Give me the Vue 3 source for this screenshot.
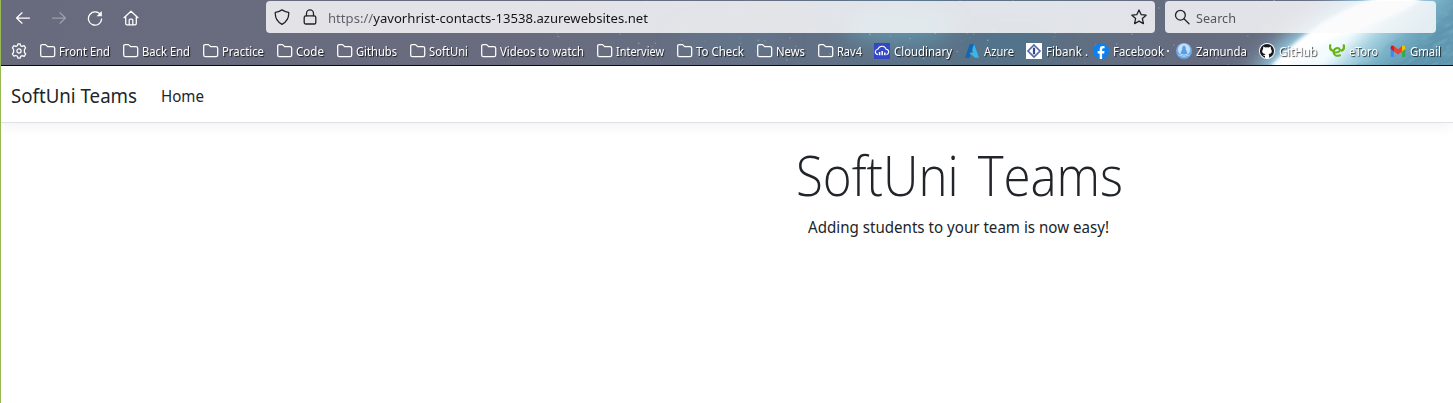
<script setup>
const fit = (el, { value }) => {
  el.style.transform = 'none'
  const w = el.getBoundingClientRect().width
  el.style.transform = `scaleX(${value / w})`
}
const vFit = { mounted: fit }

// x: left edge of the icon slot, l: left edge of the label, w: label width
const marks = [
  { t: 'Front End', i: 'folder', x: 40, l: 59, w: 51 },
  { t: 'Back End', i: 'folder', x: 123, l: 142, w: 48 },
  { t: 'Practice', i: 'folder', x: 203, l: 222, w: 42 },
  { t: 'Code', i: 'folder', x: 277, l: 296, w: 28 },
  { t: 'Githubs', i: 'folder', x: 337, l: 356, w: 41 },
  { t: 'SoftUni', i: 'folder', x: 410, l: 429, w: 39 },
  { t: 'Videos to watch', i: 'folder', x: 481, l: 500, w: 84 },
  { t: 'Interview', i: 'folder', x: 597, l: 616, w: 48 },
  { t: 'To Check', i: 'folder', x: 677, l: 696, w: 48 },
  { t: 'News', i: 'folder', x: 757, l: 776, w: 29 },
  { t: 'Rav4', i: 'folder', x: 818, l: 837, w: 25 },
  { t: 'Cloudinary', i: 'cloud', x: 874, l: 894, w: 58 },
  { t: 'Azure', i: 'azure', x: 964, l: 984, w: 30 },
  { t: 'Fibank .', i: 'fibank', x: 1026, l: 1046, w: 42 },
  { t: 'Facebook', i: 'facebook', x: 1093, l: 1113, w: 51, dot: true },
  { t: 'Zamunda', i: 'zamunda', x: 1176, l: 1196, w: 51 },
  { t: 'GitHub', i: 'github', x: 1259, l: 1279, w: 38 },
  { t: 'eToro', i: 'etoro', x: 1329, l: 1349, w: 29 },
  { t: 'Gmail', i: 'gmail', x: 1390, l: 1410, w: 31 },
].map((m, k, a) => ({ ...m, width: (a[k + 1]?.x ?? 1453) - m.x }))

const stars = Array.from({ length: 110 }, (_, k) => ({
  x: 540 + ((k * 137.5 + k * k * 3.7) % 760),
  y: (k * 23.3 + k * k * 1.9) % 66,
  o: 0.12 + ((k * 7) % 10) / 25,
}))
</script>

<template>
  <div class="window">
    <header class="chrome">
      <svg class="sky" width="1453" height="66" viewBox="0 0 1453 66" aria-hidden="true">
        <defs>
          <linearGradient id="base" x1="0" x2="1">
            <stop offset="0" stop-color="#686b7d" />
            <stop offset=".37" stop-color="#696c7e" />
            <stop offset=".52" stop-color="#656f84" />
            <stop offset=".64" stop-color="#5b7388" />
            <stop offset=".75" stop-color="#616e82" />
            <stop offset=".82" stop-color="#666c80" />
            <stop offset="1" stop-color="#667084" />
          </linearGradient>
          <linearGradient id="planet" gradientUnits="userSpaceOnUse" x1="1320" y1="10" x2="1390" y2="80">
            <stop offset="0" stop-color="#fff" />
            <stop offset=".4" stop-color="#f0fafd" />
            <stop offset=".58" stop-color="#a9d3e2" />
            <stop offset=".8" stop-color="#76aec5" />
            <stop offset="1" stop-color="#6095ae" />
          </linearGradient>
          <filter id="b2" x="-30%" y="-60%" width="160%" height="220%"><feGaussianBlur stdDeviation="2" /></filter>
          <filter id="b9" x="-60%" y="-100%" width="220%" height="300%"><feGaussianBlur stdDeviation="11" /></filter>
          <filter id="tex" x="0" y="0" width="100%" height="100%">
            <feTurbulence type="fractalNoise" baseFrequency=".07 .26" numOctaves="4" seed="8" />
            <feColorMatrix values="0 0 0 0 .16  0 0 0 0 .42  0 0 0 0 .55  3 0 0 0 -1.3" />
          </filter>
          <clipPath id="disc"><path d="M1273 66C1298 40 1340 10 1384-4H1453V66Z" /></clipPath>
        </defs>
        <rect width="1453" height="66" fill="url(#base)" />
        <g filter="url(#b9)">
          <ellipse cx="898" cy="26" rx="54" ry="16" fill="#69b2c7" opacity=".55" />
          <ellipse cx="1012" cy="44" rx="44" ry="14" fill="#397b99" opacity=".4" />
          <ellipse cx="730" cy="40" rx="55" ry="12" fill="#5e829a" opacity=".4" />
          <path d="M1248 80C1278 40 1330 0 1400-20L1390 20L1290 80Z" fill="#9fdcf2" />
        </g>
        <circle v-for="(s, k) in stars" :key="k" :cx="s.x" :cy="s.y" r=".7" fill="#d9edf7" :opacity="s.o" />
        <path d="M1271 68C1298 39 1340 8 1388-5H1456V68Z" fill="url(#planet)" filter="url(#b2)" />
        <g clip-path="url(#disc)">
          <g transform="rotate(-32 1400 40)"><rect x="1280" y="38" width="240" height="110" filter="url(#tex)" opacity=".65" /></g>
        </g>
        <path d="M1270 68C1296 39 1335 10 1384-4H1424C1400 22 1325 32 1281 68Z" fill="#fff" filter="url(#b2)" />
      </svg>

      <div class="nav-row">
        <div class="buttons">
          <svg class="i" viewBox="0 0 16 16"><path d="M14.5 8H1.7M7 2.8L1.6 8L7 13.2" /></svg>
          <svg class="i dim" viewBox="0 0 16 16"><path d="M1.5 8h12.8M9 2.8L14.4 8L9 13.2" /></svg>
          <svg class="i" viewBox="0 0 16 16"><path d="M13.7 5.2A6.6 6.6 0 1 0 14.6 9" /><path d="M14.8 1v5.2H9.6Z" fill="#fff" stroke="none" /></svg>
          <svg class="i" viewBox="0 0 16 16"><path d="M1 7.7L8 1.2L15 7.7M2.7 6.4v7.2q0 1.3 1.3 1.3h8q1.3 0 1.3-1.3V6.4M6.2 14.8V10q0-.9.9-.9h1.8q.9 0 .9.9v4.8" /></svg>
        </div>
        <div class="field url">
          <svg class="i dark" viewBox="0 0 16 16"><path d="M8 .9Q11.5 3.1 14.7 3.3Q15.3 11.5 8 15.3Q.7 11.5 1.3 3.3Q4.5 3.1 8 .9Z" /></svg>
          <svg class="i dark lock" viewBox="0 0 16 16"><rect x="2.2" y="6.8" width="11.6" height="8.2" rx="1.6" /><path d="M4.5 6.8V4.4a3.5 3.5 0 0 1 7 0v2.4" /></svg>
          <span class="address"><span v-fit="320" class="fit"><span class="scheme">https://</span>yavorhrist-contacts-13538.azurewebsites.net</span></span>
          <svg class="i dark" viewBox="0 0 16 16"><path d="M8 1l2.1 4.6 5 .6-3.7 3.4 1 5L8 12.1l-4.4 2.5 1-5L.9 6.2l5-.6Z" /></svg>
        </div>
        <div class="field search">
          <svg class="i dark" viewBox="0 0 16 16"><circle cx="6.4" cy="6.2" r="4.9" /><path d="M10 9.8l5 5" /></svg>
          <span v-fit="40" class="fit hint">Search</span>
        </div>
      </div>

      <div class="bookmarks">
        <svg class="i gear" viewBox="0 0 16 16"><path d="M6.4 2.7L7 .8h2l.6 1.9 1.5.7 2-.7 1.5 2.2-1.2 1.6v2.8l1.3 1.7-1.5 2.3-2-.7-1.5.8L9 15.2H7l-.6-1.9-1.6-.8-1.9.7L1.3 11l1.3-1.7V6.5L1.4 4.8l1.5-2.2 2 .8Z" /><circle cx="8" cy="8" r="2.1" /></svg>
        <div v-for="m in marks" :key="m.t" class="mark" :style="{ width: m.width + 'px' }">
          <span class="slot" :style="{ width: m.l - m.x + 'px' }">
            <svg v-if="m.i === 'folder'" class="i" viewBox="0 0 16 16"><path d="M.7 12.1V3.1Q.7 1.6 2.2 1.6h3q.6 0 1 .5l1.4 1.5h5.2q1.9 0 1.9 1.7v6.8q0 1.6-1.7 1.6H2.4Q.7 13.7.7 12.1Z" /></svg>
            <svg v-else class="brand" viewBox="0 0 16 16">
              <g v-if="m.i === 'cloud'">
                <rect width="16" height="16" fill="#3448c5" />
                <path d="M4.1 11.6Q1.2 11.2 1.3 8.8Q1.5 6.6 3.8 6.3Q5 3.1 8.2 3.2Q11.3 3.4 12.1 6.3Q14.7 6.6 14.7 9Q14.6 11.1 12.4 11.6" fill="none" stroke="#fff" stroke-width="1.1" />
                <path d="M5.6 9v3.2M8.2 8v4.2M10.8 9.6v2.6" stroke="#fff" stroke-width="1.5" />
              </g>
              <g v-else-if="m.i === 'azure'">
                <path d="M6 1h4L5.5 14.7H1.2Z" fill="#1268ad" /><path d="M10 1l5 13.7h-4L5 9.7h4.2L7.7 5Z" fill="#35b8ee" /><path d="M6 1h4L8.1 7 5 10l.2 4.7h-4Z" fill="#1269b0" />
              </g>
              <g v-else-if="m.i === 'fibank'">
                <rect width="16" height="16" fill="#fff" /><path d="M8 2l6 6-6 6-6-6Z" fill="none" stroke="#5968a7" stroke-width="1.7" /><path d="M8 4.7v6.6" stroke="#34468f" stroke-width="2.2" />
              </g>
              <g v-else-if="m.i === 'facebook'">
                <circle cx="8" cy="8" r="8" fill="#0c80f0" /><path d="M6.7 16v-5.6h-2V8h2V6.3q0-3.3 3.2-3.3l1.7.2v2h-1q-1.5 0-1.5 1.4V8h2.4l-.4 2.4h-2V16Z" fill="#fff" />
              </g>
              <g v-else-if="m.i === 'zamunda'">
                <circle cx="8" cy="8" r="8" fill="#6aa9e8" /><circle cx="8" cy="6.5" r="6.1" fill="#c3dff8" /><path d="M8 2.2q2.1 1.3 1.9 4.5l1.7 3.6q-3.6 2.4-7.2 0l1.7-3.6Q5.9 3.5 8 2.2Z" fill="#5a9ce6" /><path d="M2.5 12q5.5 3 11 0" stroke="#a9d5fa" fill="none" />
              </g>
              <g v-else-if="m.i === 'github'">
                <circle cx="8" cy="8" r="8" fill="#fff" /><circle cx="8" cy="8" r="7.1" fill="#15181e" />
                <path d="M4.3 3.4l2 1.1q1.7-.4 3.4 0l2-1.1.2 2.3q2.6 4.5-2.3 5.4.5.6.5 1.5v2.5H6v-2l-2.3-.8 2.4-.6.3-.6Q1.5 10.2 4.1 5.7Z" fill="#fff" />
              </g>
              <g v-else-if="m.i === 'etoro'" fill="none" stroke="#66b413" stroke-linecap="round">
                <path d="M1.2 2.4Q.2 6.4 3.4 7.6M14.8 2.4Q15.8 6.4 12.6 7.6" stroke-width="2.3" />
                <path d="M5.4 9.6Q11 9 11 6.9Q10 4.6 7.4 5.2Q4.4 6.2 4.6 10Q6 14.2 11 12.2" stroke-width="2" />
              </g>
              <g v-else>
                <path d="M.7 3.8l3.2 2.5V14H1.8q-1.1 0-1.1-1.1Z" fill="#4285f4" /><path d="M15.3 3.8l-3.2 2.5V14h2.1q1.1 0 1.1-1.1Z" fill="#34a853" /><path d="M12 3.2q2.4-1.9 3.3.7v2L12 8.6Z" fill="#fbbc04" /><path d="M4 3.1L8 6.2l4-3.1v5.4l-4 3-4-3Z" fill="#ea4335" /><path d="M.7 3.9Q1.3 1.4 4 3.1v5.4L.7 6Z" fill="#c5221f" />
              </g>
            </svg>
          </span>
          <span v-fit="m.w" class="fit label">{{ m.t }}</span>
          <i v-if="m.dot" class="dot"></i>
        </div>
      </div>
    </header>

    <main class="page">
      <nav class="navbar">
        <span class="brand-slot"><span v-fit="126" class="fit brand-name">SoftUni Teams</span></span>
        <span v-fit="43" class="fit home">Home</span>
      </nav>
      <section class="hero">
        <h1><span v-fit="327" class="fit">SoftUni Teams</span></h1>
        <p><span v-fit="301" class="fit">Adding students to your team is now easy!</span></p>
      </section>
    </main>
  </div>
</template>

<style>
html, body { margin: 0; overflow: hidden; background: #fff; }
</style>

<style scoped>
.window { width: 1453px; height: 403px; box-sizing: border-box; border-left: 1px solid #98b954; overflow: hidden; font-family: "Noto Sans", "Open Sans", sans-serif; color: #212529; }
.chrome { position: relative; height: 66px; box-sizing: border-box; border-bottom: 1px solid #050b18; overflow: hidden; }
.sky { position: absolute; left: -1px; top: 0; }
.fit { display: inline-block; white-space: nowrap; transform-origin: 0 50%; }
.i { width: 16px; height: 16px; flex: none; fill: none; stroke: #fff; stroke-width: 1.25; stroke-linecap: round; stroke-linejoin: round; }
.dim { opacity: .35; }
.dark { stroke: #20212a; stroke-width: 1.3; }
.nav-row { position: relative; display: flex; height: 35px; }
.buttons { display: flex; align-items: center; gap: 20px; width: 251px; padding-left: 14px; }
.field { display: flex; align-items: center; box-sizing: border-box; height: 32px; margin-top: 1px; border-radius: 4px; background: rgba(250, 250, 252, .84); font-size: 13px; }
.url { width: 889px; padding: 0 8px; }
.lock { margin-left: 12px; }
.address { flex: 1; margin-left: 10px; padding-top: 2px; color: #15141a; line-height: 30px; }
.scheme { color: #62626c; }
.search { width: 271px; margin-left: 10px; padding-left: 9px; }
.hint { margin-left: 6px; padding-top: 2px; color: #55555f; }
.bookmarks { position: relative; display: flex; align-items: center; height: 32px; padding-left: 10px; }
.gear { margin-right: 13px; }
.mark { display: flex; align-items: center; flex: none; height: 32px; }
.slot { display: flex; flex: none; }
.brand { width: 16px; height: 16px; }
.label { width: max-content; flex: none; padding-top: 2px; color: #fff; font-size: 12px; line-height: 20px; text-shadow: 1px 1px 1px rgba(0, 0, 0, .75); }
.dot { width: 2px; height: 2px; border-radius: 50%; background: #fff; }
.page { height: 337px; }
.navbar { display: flex; align-items: center; box-sizing: border-box; height: 57px; padding: 3px 0 0 10px; border-bottom: 1px solid #dee2e6; box-shadow: 0 4px 12px rgba(0, 0, 0, .05); }
.brand-slot { width: 150px; }
.brand-name { font-size: 20px; line-height: 30px; }
.home { font-size: 16px; line-height: 24px; }
.hero { width: 327px; margin: 18px 0 0 795px; }
h1 { margin: 0; font-family: "Open Sans", "Noto Sans", sans-serif; font-size: 55px; font-weight: 300; line-height: 67px; word-spacing: 7px; }
p { margin: 7px 0 0 12px; font-size: 16px; line-height: 24px; }
</style>
